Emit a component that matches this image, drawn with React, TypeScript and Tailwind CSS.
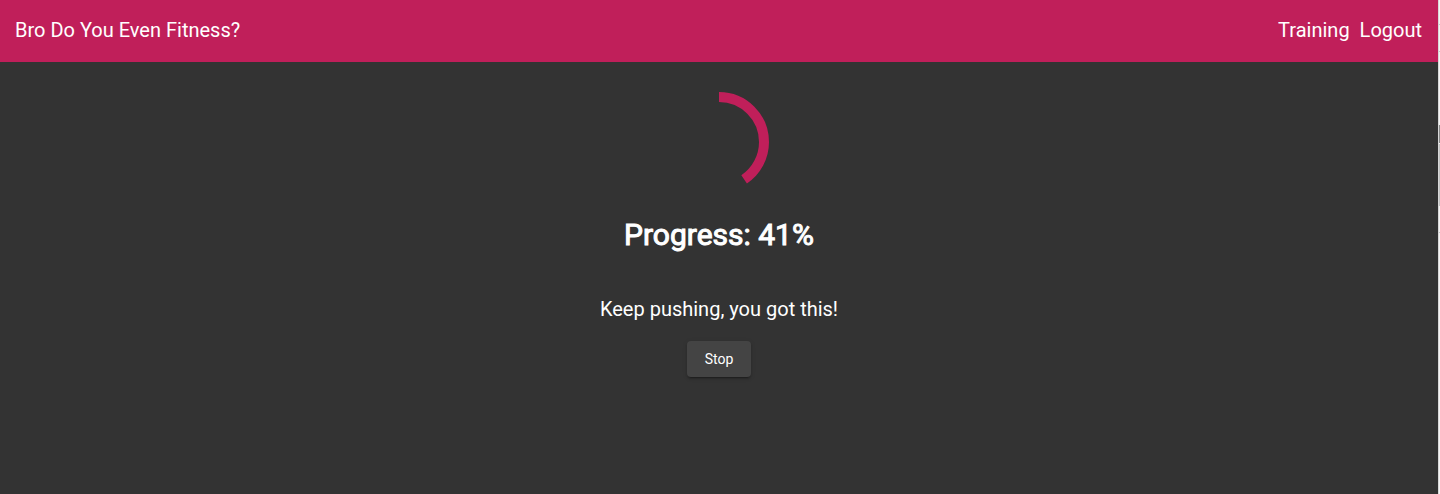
const progress = 41;

function ProgressSpinner({ value }: { value: number }) {
  const radius = 45;
  const circumference = 2 * Math.PI * radius;
  const arc = (circumference * (value - 0.5)) / 100;
  return (
    <svg
      role="progressbar"
      aria-label="Training progress"
      aria-valuenow={value}
      aria-valuemin={0}
      aria-valuemax={100}
      viewBox="0 0 100 100"
      className="size-[100px] -rotate-90"
    >
      <circle
        cx="50"
        cy="50"
        r={radius}
        fill="none"
        stroke="#c01f5a"
        strokeWidth="10"
        strokeDasharray={circumference}
        strokeDashoffset={circumference - arc}
      />
    </svg>
  );
}

function WindowEdge() {
  return (
    <div aria-hidden="true" className="flex w-0.5 shrink-0 flex-col border-l border-[#d8d8d8] bg-[#f5f5f5]">
      <div className="mt-6 h-px bg-[#c8c8c8]" />
      <div className="mt-[26px] h-px bg-[#c8c8c8]" />
      <div className="mt-[73px] h-[18px] bg-[#8c8c8c]" />
      <div className="mt-px h-[62px] bg-[#c4c4c4]" />
      <div className="mt-[26px] h-px bg-[#c8c8c8]" />
    </div>
  );
}

export default function App() {
  return (
    <div className="flex min-h-screen bg-[#333333] font-[Roboto,sans-serif] text-xl text-white">
      <div className="flex min-w-0 grow flex-col">
        <header className="flex h-[62px] items-center justify-between bg-[#c01f5a] pr-4 pb-0.5 pl-[15px]">
          <a href="#home">Bro Do You Even Fitness?</a>
          <nav className="flex gap-2.5">
            <a href="#training">Training</a>
            <a href="#logout">Logout</a>
          </nav>
        </header>
        <main className="flex flex-col items-center pt-[30px]">
          <ProgressSpinner value={progress} />
          <h1 className="mt-6 text-[30px] leading-[38px] [-webkit-text-stroke:1px_white]">Progress: {progress}%</h1>
          <p className="mt-[42px] leading-[26px]">Keep pushing, you got this!</p>
          <button
            type="button"
            className="mt-[19px] h-9 min-w-16 rounded bg-[#444444] px-4 text-sm shadow-[0_3px_1px_-2px_rgba(0,0,0,0.2),0_2px_2px_0_rgba(0,0,0,0.14),0_1px_5px_0_rgba(0,0,0,0.12)]"
          >
            Stop
          </button>
        </main>
      </div>
      <WindowEdge />
    </div>
  );
}
